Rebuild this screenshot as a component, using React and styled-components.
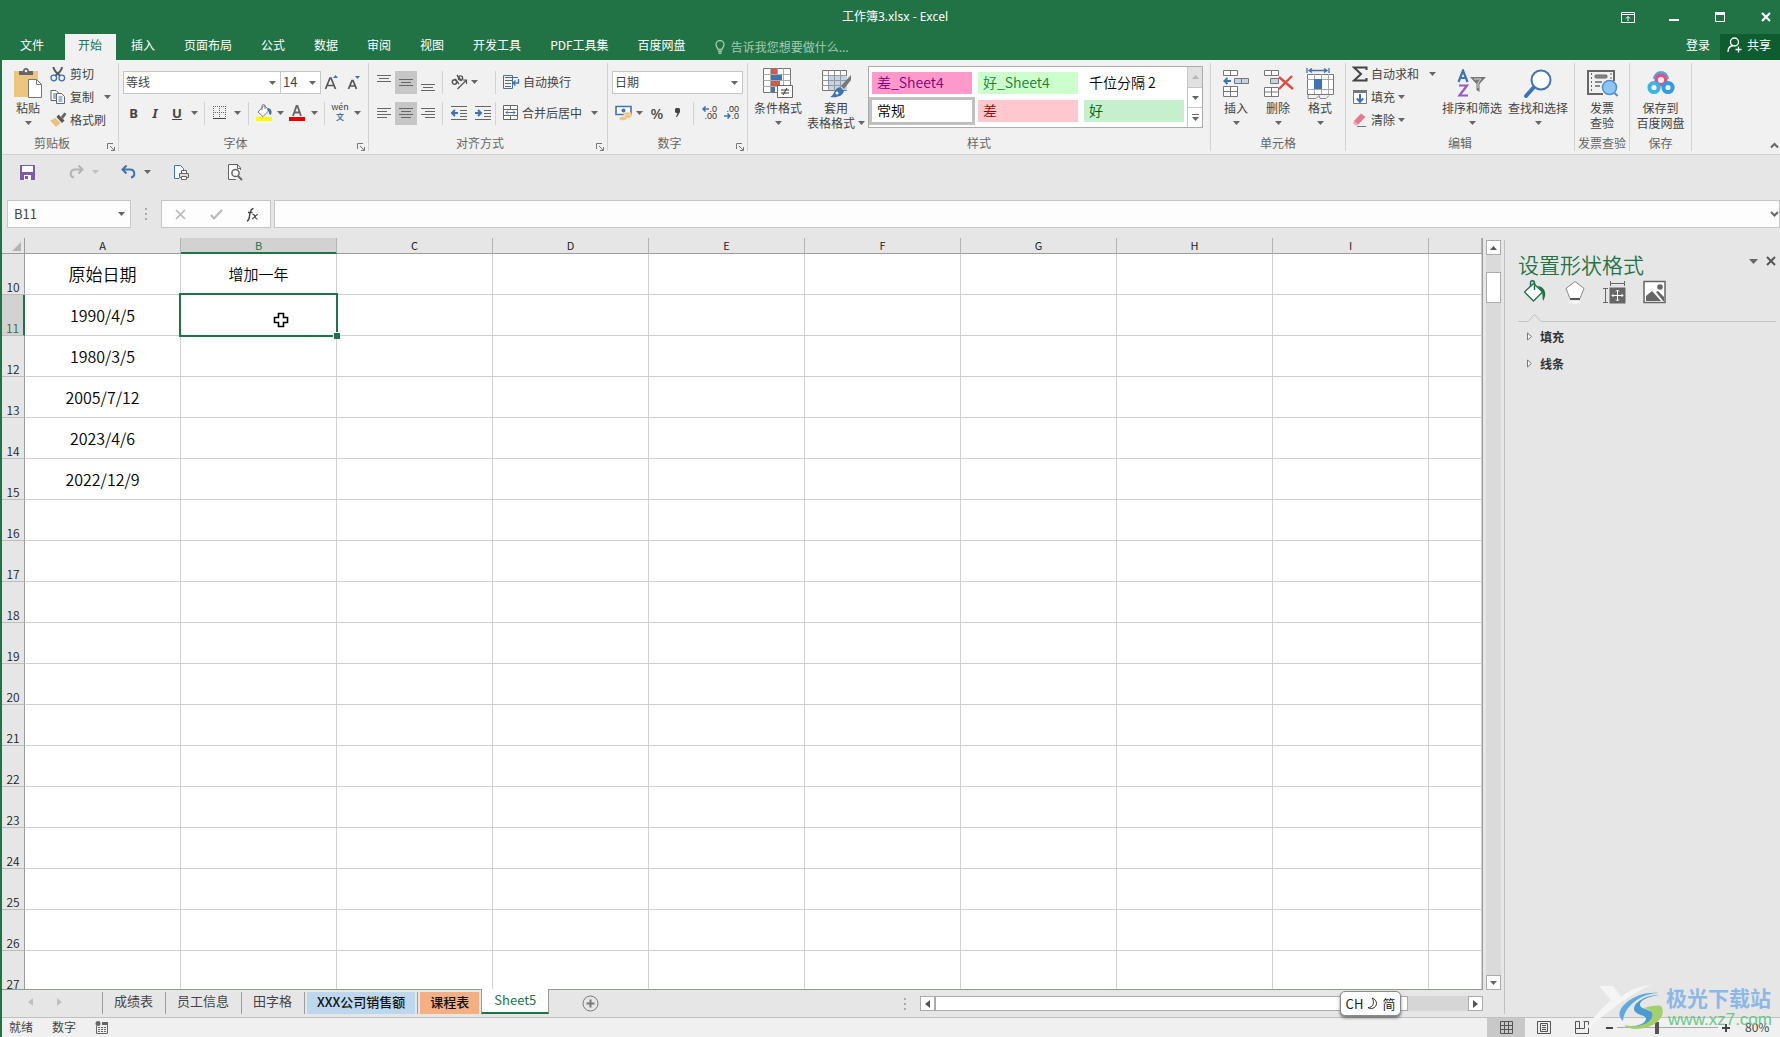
import React from "react";
import styled, { createGlobalStyle, css } from "styled-components";

const GREEN = "#217346";
const INK = "#444444";
const BLUE = "#3f74b1";

const GlobalStyle = createGlobalStyle`
  * { box-sizing: border-box; }
  html, body { margin: 0; height: 100%; overflow: hidden; }
  body, button, input, select {
    font-family: "Noto Sans CJK SC", "Noto Sans", sans-serif;
    font-size: 12px;
    line-height: 16px;
    color: ${INK};
  }
  button { border: 0; padding: 0; margin: 0; background: transparent; }
  svg { display: block; flex: none; }
`;

/* ---------- shell ---------- */
const Window = styled.div`
  position: relative;
  display: flex;
  flex-direction: column;
  height: 100vh;
  background: #e6e6e6;
  border-left: 2px solid ${GREEN};
  overflow: hidden;
`;
const TitleBar = styled.header`
  display: grid;
  grid-template-columns: 200px 1fr 200px;
  align-items: center;
  height: 34px;
  flex: none;
  background: ${GREEN};
  color: #fff;
`;
const Title = styled.h1`
  grid-column: 2;
  margin: 0;
  font-family: "Noto Sans", "Noto Sans CJK SC", sans-serif;
  font-size: 12px;
  line-height: 16px;
  font-weight: 400;
  text-align: center;
  padding-left: 8px;
`;
const WindowButtons = styled.div`
  display: flex;
  justify-content: flex-end;
`;
const WindowButton = styled.button`
  width: 46px;
  height: 32px;
  display: flex;
  align-items: center;
  justify-content: center;
  color: #fff;
  &:last-child { width: 37px; justify-content: flex-start; padding-left: 18px; }
`;

/* ---------- ribbon tabs ---------- */
const TabRow = styled.nav`
  display: flex;
  height: 26px;
  flex: none;
  background: ${GREEN};
`;
const RibbonTab = styled.button`
  height: 26px;
  margin: 0 1px;
  padding: 0 14px 4px 13px;
  white-space: nowrap;
  color: ${(p) => (p.$active ? GREEN : "#fff")};
  background: ${(p) => (p.$active ? "#f1f1f1" : "transparent")};
`;
const FileTab = styled(RibbonTab)`
  width: 60px;
  padding: 0 15px 4px 13px;
`;
const TellMe = styled.label`
  display: flex;
  align-items: center;
  gap: 6px;
  margin-left: 14px;
  color: #a3cbb2;
`;
const TellMeInput = styled.input`
  width: 140px;
  border: 0;
  padding: 0;
  background: transparent;
  &::placeholder { color: #a3cbb2; opacity: 1; }
`;
const Spacer = styled.div`
  flex: 1;
`;
const SignIn = styled.button`
  color: #fff;
  padding: 0 10px 4px;
`;
const Share = styled.button`
  display: flex;
  align-items: center;
  gap: 4px;
  width: 60px;
  padding-left: 7px;
  padding-bottom: 4px;
  color: #fff;
  background: #0e5c2f;
`;

/* ---------- ribbon ---------- */
const Ribbon = styled.section`
  display: flex;
  position: relative;
  height: 95px;
  flex: none;
  padding-top: 3px;
  background: #f1f1f1;
  border-bottom: 1px solid #d0d0d0;
`;
const GroupBox = styled.div`
  display: flex;
  flex-direction: column;
  width: ${(p) => p.$w}px;
  height: 88px;
  flex: none;
  border-right: 1px solid #d2d2d2;
`;
const GroupBody = styled.div`
  display: flex;
  height: 73px;
  padding-left: ${(p) => p.$pad || 4}px;
`;
const GroupFoot = styled.div`
  position: relative;
  height: 15px;
  line-height: 13px;
  text-align: center;
  white-space: nowrap;
  color: #666;
  padding-right: ${(p) => (p.$launch ? 16 : 0)}px;
`;
const Launcher = styled.button`
  position: absolute;
  right: 3px;
  bottom: 0;
  width: 8px;
  height: 8px;
`;
const Stack = styled.div`
  display: flex;
  flex-direction: column;
`;
const ToolRows = styled.div`
  display: flex;
  flex-direction: column;
  gap: 8px;
  padding-top: 8px;
`;
const ToolRow = styled.div`
  display: flex;
  align-items: center;
  height: 23px;
`;
const ToolButton = styled.button`
  display: flex;
  align-items: center;
  justify-content: ${(p) => (p.$start ? "flex-start" : "center")};
  gap: ${(p) => p.$gap || 4}px;
  width: ${(p) => p.$w || 22}px;
  height: 23px;
  padding-bottom: 2px;
  flex: none;
  white-space: nowrap;
  background: ${(p) => (p.$on ? "#c6c6c6" : "transparent")};
`;
const LetterButton = styled(ToolButton)`
  font-family: "Noto Sans", sans-serif;
  font-size: ${(p) => p.$size || 13}px;
  font-weight: ${(p) => p.$weight || 700};
  font-style: ${(p) => (p.$italic ? "italic" : "normal")};
  text-decoration: ${(p) => (p.$under ? "underline" : "none")};
`;
const Divider = styled.i`
  width: 1px;
  height: 23px;
  margin: 0 ${(p) => p.$r ?? 4}px 0 ${(p) => p.$l ?? 3}px;
  background: #d2d2d2;
`;
const LargeButton = styled.button`
  display: flex;
  flex-direction: column;
  align-items: center;
  width: ${(p) => p.$w}px;
  flex: none;
  height: 70px;
  padding-top: 5px;
  line-height: 15px;
  white-space: nowrap;
`;
const LargeIcon = styled.span`
  display: flex;
  align-items: center;
  justify-content: center;
  height: 30px;
  margin-bottom: 2px;
`;
const LargeLine = styled.span`
  display: flex;
  align-items: center;
  justify-content: center;
  gap: 3px;
  height: 15px;
`;
const SelectBox = styled.label`
  position: relative;
  display: flex;
  width: ${(p) => p.$w}px;
  height: 23px;
  margin-left: ${(p) => (p.$join ? -1 : 0)}px;
  background: #fff;
  border: 1px solid #c6c6c6;
  & > svg { position: absolute; right: 4px; top: 9px; pointer-events: none; }
`;
const Select = styled.select`
  appearance: none;
  width: 100%;
  border: 0;
  padding: 0 0 1px 2px;
  background: transparent;
  font-size: ${(p) => p.$size || 12}px;
`;

/* ---------- style gallery ---------- */
const Gallery = styled.div`
  display: flex;
  width: 335px;
  height: 62px;
  margin-top: 3px;
  background: #fff;
  border: 1px solid #ababab;
`;
const GalleryGrid = styled.div`
  display: grid;
  grid-template-columns: repeat(3, 100px);
  grid-auto-rows: 22px;
  gap: 6px;
  padding: 5px 3px;
  flex: 1;
`;
const StyleChip = styled.button`
  padding: 0 5px 2px;
  text-align: left;
  font-size: 14px;
  line-height: 20px;
  font-weight: 350;
  white-space: nowrap;
  color: ${(p) => p.$ink};
  background: ${(p) => p.$bg};
  outline: ${(p) => (p.$selected ? "3px solid #c0c0c0" : "none")};
`;
const GalleryScroll = styled.div`
  display: grid;
  grid-template-rows: 20px 20px 20px;
  width: 15px;
  border-left: 1px solid #c6c6c6;
`;
const GalleryStep = styled.button`
  display: flex;
  flex-direction: column;
  gap: 2px;
  align-items: center;
  justify-content: center;
  background: ${(p) => (p.$off ? "#e1e1e1" : "#fff")};
  color: ${(p) => (p.$off ? "#b5b5b5" : "#666")};
  & + & { border-top: 1px solid #c6c6c6; }
`;
const Collapse = styled.button`
  position: absolute;
  right: 0;
  bottom: 4px;
  width: 10px;
  height: 10px;
`;

/* ---------- quick access and formula bar ---------- */
const QuickBar = styled.div`
  display: flex;
  align-items: center;
  height: 45px;
  flex: none;
  padding: 0 0 11px 12px;
`;
const QuickButton = styled.button`
  display: flex;
  align-items: center;
  justify-content: center;
  gap: 8px;
  width: ${(p) => p.$w}px;
  height: 24px;
  margin-right: ${(p) => p.$after}px;
`;
const FormulaBar = styled.div`
  display: flex;
  height: 28px;
  flex: none;
  padding-left: 5px;
`;
const FieldBox = styled.div`
  display: flex;
  align-items: center;
  justify-content: space-between;
  width: ${(p) => p.$w}px;
  flex: ${(p) => (p.$grow ? 1 : "none")};
  background: #fdfdfd;
  border: 1px solid #c6c6c6;
`;
const NameInput = styled.input`
  width: 100px;
  border: 0;
  padding: 0 0 0 6px;
  font-size: 13px;
  background: transparent;
`;
const FormulaInput = styled.input`
  flex: 1;
  border: 0;
  padding: 0 6px;
  background: transparent;
`;
const BarButton = styled.button`
  display: flex;
  align-items: center;
  justify-content: center;
  width: ${(p) => p.$w}px;
  height: 26px;
`;
const Grip = styled.span`
  display: flex;
  align-items: center;
  justify-content: center;
  width: ${(p) => p.$w}px;
`;

/* ---------- work area ---------- */
const Work = styled.main`
  display: flex;
  flex: 1;
  min-height: 0;
  padding-top: 10px;
`;
const SheetSide = styled.div`
  display: flex;
  flex-direction: column;
  flex: 1;
  min-width: 0;
`;
const GridRow = styled.div`
  display: flex;
  flex: 1;
  min-height: 0;
`;
const GridView = styled.div`
  flex: 1;
  overflow: hidden;
  border-right: 1px solid #9c9c9c;
  border-bottom: 1px solid #8f9b8f;
`;
const Table = styled.table`
  width: 100%;
  table-layout: fixed;
  border-collapse: separate;
  border-spacing: 0;
`;
const Corner = styled.th`
  width: 23px;
  height: 16px;
  padding: 0 3px 2px 0;
  vertical-align: bottom;
  border-right: 1px solid #9c9c9c;
  border-bottom: 1px solid #9c9c9c;
  & > svg { margin-left: auto; }
`;
const ColHead = styled.th`
  width: ${(p) => (p.$last ? "auto" : "156px")};
  height: 16px;
  padding: 0;
  font-size: 11px;
  line-height: 13px;
  font-weight: 400;
  background: ${(p) => (p.$on ? "#d2d2d2" : "#e6e6e6")};
  color: ${(p) => (p.$on ? GREEN : "#222")};
  border-right: 1px solid #b4b4b4;
  border-bottom: ${(p) => (p.$on ? `2px solid ${GREEN}` : "1px solid #9c9c9c")};
`;
const RowHead = styled.th`
  height: 41px;
  padding: 0 0 1px;
  font-size: 12px;
  line-height: 13px;
  font-weight: 350;
  vertical-align: bottom;
  background: ${(p) => (p.$on ? "#d2d2d2" : "#e6e6e6")};
  color: ${(p) => (p.$on ? GREEN : "#222")};
  border-right: ${(p) => (p.$on ? `2px solid ${GREEN}` : "1px solid #9c9c9c")};
  border-bottom: 1px solid #bdbdbd;
`;
const Cell = styled.td`
  position: relative;
  height: 41px;
  padding: 0;
  text-align: center;
  vertical-align: middle;
  font-size: ${(p) => p.$size || 16}px;
  line-height: 22px;
  font-weight: 350;
  color: #000;
  background: #fff;
  border-right: 1px solid #d0d0d0;
  border-bottom: 1px solid #d0d0d0;
`;
const Selection = styled.span`
  position: absolute;
  z-index: 1;
  inset: -2px;
  border: 2px solid ${GREEN};
  &::after {
    content: "";
    position: absolute;
    right: -4px;
    bottom: -4px;
    width: 6px;
    height: 6px;
    background: ${GREEN};
    border: solid #fff;
    border-width: 1px 0 0 1px;
  }
`;
const Pointer = styled.span`
  position: absolute;
  z-index: 2;
  left: 92px;
  top: 17px;
`;
const VScroll = styled.div`
  display: flex;
  flex-direction: column;
  width: 15px;
  margin: 2px 3px 0 3px;
  background: #dadada;
`;
const ScrollStep = styled.button`
  display: flex;
  align-items: center;
  justify-content: center;
  width: 15px;
  height: 15px;
  flex: none;
  background: #fff;
  border: 1px solid #ababab;
  color: #555;
`;
const VThumb = styled.div`
  height: 31px;
  margin-top: 17px;
  background: #fff;
  border: 1px solid #ababab;
`;

/* ---------- sheet tabs ---------- */
const SheetBar = styled.div`
  display: flex;
  height: 27px;
  flex: none;
`;
const SheetNav = styled.div`
  display: flex;
  align-items: center;
  gap: 24px;
  width: 101px;
  padding: 0 0 2px 26px;
  color: #c0c0c0;
  border-right: 1px solid #9c9c9c;
  height: 22px;
  margin-top: 2px;
`;
const SheetTab = styled.button`
  height: 22px;
  margin-top: 2px;
  padding: 0 12px 4px 11px;
  font-size: 13px;
  white-space: nowrap;
  color: ${INK};
  border-right: 1px solid #9c9c9c;
  ${(p) => p.$active && css`
    height: 25px;
    margin-top: -1px;
    padding: 0 12px 2px 12px;
    background: #fff;
    color: ${GREEN};
    border-left: 1px solid #9c9c9c;
    border-bottom: 2px solid ${GREEN};
  `}
`;
const ColoredTab = styled(SheetTab)`
  padding: 0 2px;
  color: #111;
  font-weight: 500;
  border-right: ${(p) => (p.$last ? 0 : "1px solid #9c9c9c")};
`;
const TabColor = styled.span`
  display: block;
  height: 22px;
  padding: 1px 10px 3px;
  line-height: 18px;
  background: ${(p) => p.$bg};
`;
const AddSheet = styled.button`
  display: flex;
  margin: 5px 0 0 33px;
  width: 17px;
  height: 17px;
`;
const HScroll = styled.div`
  position: relative;
  display: flex;
  width: 563px;
  height: 15px;
  margin: 6px 21px 0 0;
  background: #d6d6d6;
`;
const HThumb = styled.div`
  width: 473px;
  background: #fff;
  border: 1px solid #ababab;
`;
const ImeBadge = styled.div`
  position: absolute;
  left: 420px;
  top: -5px;
  display: flex;
  align-items: center;
  justify-content: center;
  gap: 4px;
  width: 61px;
  height: 25px;
  font-size: 13px;
  white-space: nowrap;
  color: #222;
  background: #fff;
  border: 1px solid #8a8a8a;
  border-radius: 5px;
  box-shadow: 0 2px 3px rgba(0, 0, 0, 0.5);
`;

/* ---------- format pane ---------- */
const Pane = styled.aside`
  width: 276px;
  flex: none;
  margin: 2px 0 3px;
  padding: 12px 4px 0 13px;
  border-left: 1px solid #c0c0c0;
`;
const PaneHead = styled.div`
  display: flex;
  align-items: flex-start;
  gap: 8px;
`;
const PaneTitle = styled.h2`
  flex: 1;
  margin: 0;
  font-size: 21px;
  line-height: 24px;
  font-weight: 350;
  color: ${GREEN};
`;
const PaneTool = styled.button`
  display: flex;
  align-items: center;
  height: 12px;
  margin-top: 3px;
  color: #555;
`;
const PaneTabs = styled.div`
  display: flex;
  gap: 16px;
  padding: 4px 0 0 5px;
`;
const PaneTab = styled.button`
  width: 24px;
  height: 24px;
`;
const PaneRule = styled.svg`
  width: 100%;
  height: 10px;
  margin: 9px 0 3px;
`;
const PaneSection = styled.button`
  display: flex;
  align-items: center;
  gap: 8px;
  height: 27px;
  padding-left: 9px;
  padding-bottom: 6px;
  font-weight: 700;
  font-size: 12px;
  color: #333;
`;

/* ---------- status bar ---------- */
const StatusBar = styled.footer`
  display: flex;
  align-items: center;
  height: 20px;
  flex: none;
  padding-left: 7px;
  background: #f0f0f0;
  border-top: 1px solid #c0c0c0;
`;
const StatusText = styled.span`
  margin-right: 19px;
  padding-bottom: 2px;
`;
const ViewButton = styled.button`
  display: flex;
  align-items: center;
  justify-content: center;
  width: 38px;
  height: 19px;
  background: ${(p) => (p.$on ? "#c8c8c8" : "transparent")};
`;
const ZoomStep = styled.button`
  display: flex;
  width: 8px;
  height: 8px;
  color: #444;
`;
const ZoomRange = styled.input`
  appearance: none;
  width: 101px;
  height: 12px;
  margin: 0 4px 0 4px;
  background: linear-gradient(#a8a8a8, #a8a8a8) center / 100% 1px no-repeat;
  &::-webkit-slider-thumb {
    appearance: none;
    width: 4px;
    height: 12px;
    background: #555;
  }
`;
const ZoomValue = styled.span`
  width: 50px;
  padding: 0 0 2px 15px;
`;
const Watermark = styled.div`
  position: absolute;
  right: 8px;
  bottom: 5px;
  display: flex;
  align-items: flex-start;
  pointer-events: none;
`;
const MarkText = styled.div`
  display: flex;
  flex-direction: column;
`;
const MarkName = styled.span`
  font-size: 21px;
  line-height: 26px;
  font-weight: 700;
  color: #8db8e6;
`;
const MarkUrl = styled.span`
  padding-left: 2px;
  font-family: "Liberation Sans", sans-serif;
  font-size: 17px;
  line-height: 20px;
  color: #6cc788;
`;

/* ---------- icons ---------- */
const Down = ({ c = "#666" }) => (
  <svg width="7" height="4" viewBox="0 0 7 4"><path d="M0 0h7L3.5 4z" fill={c} /></svg>
);
const Up = ({ c = "currentColor" }) => (
  <svg width="7" height="4" viewBox="0 0 7 4"><path d="M0 4h7L3.5 0z" fill={c} /></svg>
);
const Side = ({ flip, s = 8 }) => (
  <svg width="5" height={s} viewBox="0 0 5 8"><path d={flip ? "M5 0v8L0 4z" : "M0 0v8l5-4z"} fill="currentColor" /></svg>
);
const LaunchIcon = () => (
  <svg width="8" height="8" viewBox="0 0 8 8" fill="none" stroke="#777"><path d="M.5 6V.5H6M3 3l4 4M7.500 4v3.500H4" /></svg>
);
const PasteIcon = () => (
  <svg width="30" height="30" viewBox="0 0 30 30">
    <rect x="1" y="3" width="24" height="26" fill="#ecc57f" />
    <path d="M6 3h4c0-4 6-4 6 0h4v4H6z" fill="#666" /><circle cx="13" cy="3" r="1.300" fill="#eee" />
    <path d="M15.500 11.500h8l5 5v13h-13z" fill="#fff" stroke="#777" /><path d="M23.500 11.500v5h5" fill="none" stroke="#777" />
  </svg>
);
const CutIcon = () => (
  <svg width="16" height="16" viewBox="0 0 16 16" fill="none">
    <path d="M3.500 1c0 3 3 6 7 9M12 1c0 3-3 6-7 9" stroke="#555" strokeWidth="2" />
    <circle cx="3.800" cy="12" r="2.800" stroke={BLUE} strokeWidth="1.300" /><circle cx="11.800" cy="12" r="2.800" stroke={BLUE} strokeWidth="1.300" />
  </svg>
);
const CopyIcon = () => (
  <svg width="16" height="16" viewBox="0 0 16 16" fill="#fff" stroke="#666">
    <path d="M1 1.500h5l2 2v8H1z" /><path d="M3 5h3M3 7h3M3 9h3" stroke={BLUE} />
    <path d="M6.500 4.500h5l3 3v7h-8z" /><path d="M8.500 8h4M8.500 10h4M8.500 12h4" stroke={BLUE} />
  </svg>
);
const BrushIcon = () => (
  <svg width="17" height="16" viewBox="0 0 17 16">
    <path d="M0 8.500l5.500-2.500 5 5L6 15z" fill="#ecc07c" /><path d="M6.500 5l2-2.500 6 6-2.500 2.500z" fill="#555" /><path d="M11 4.500L14.500.5l2 1.500-3.500 5z" fill="#666" />
  </svg>
);
const GrowIcon = ({ down }) => (
  <svg width="16" height="18" viewBox="0 0 16 18">
    <path d={down ? "M2.500 16L6 7.500h1L10.500 16M4 13h5" : "M1.500 16L6 5h1l4.500 11M3.500 12.500h6"} fill="none" stroke="#555" strokeWidth="1.700" />
    <path d={down ? "M9 3h5l-2.500 3z" : "M9 5h5l-2.500-3z"} fill={BLUE} />
  </svg>
);
const BorderIcon = () => (
  <svg width="14" height="14" viewBox="0 0 14 14" fill="none" stroke="#666"><path d="M.5 0v12M6.500 0v12M12.500 0v12M0 .5h13M0 6.500h13" strokeDasharray="1 1" /><path d="M0 12.500h13" stroke="#444" /></svg>
);
const FillIcon = () => (
  <svg width="17" height="17" viewBox="0 0 17 17">
    <path d="M8 1.500L2 8l5 4.500L13.500 6z" fill="#fff" stroke="#777" /><path d="M6 6V2c0-2 3-2 3 0v3" fill="none" stroke="#777" />
    <path d="M12 4c4 1 4 4 3 7l-2-1c0-2 0-3-2-4z" fill={BLUE} /><rect y="13" width="16" height="4" fill="#ffff00" />
  </svg>
);
const FontColorIcon = () => (
  <svg width="16" height="17" viewBox="0 0 16 17"><path d="M4 12L7.500 2h1L12 12M5.500 8.500h5" fill="none" stroke="#666" strokeWidth="1.800" /><rect y="13" width="16" height="4" fill="#e60000" /></svg>
);
const Phonetic = styled.span`
  display: flex;
  flex-direction: column;
  align-items: center;
  font-size: 9px;
  line-height: 9px;
`;
const PhoneticBase = styled.b`
  font-size: 8px;
  line-height: 12px;
  color: ${BLUE};
`;
const LinesIcon = ({ lines, y = 0 }) => (
  <svg width="14" height="18" viewBox="0 0 14 18" stroke="#666">
    {lines.map(([a, b], i) => <path key={i} d={`M${a} ${y + i * 3 + 0.5}H${b}`} />)}
  </svg>
);
const OrientIcon = () => (
  <svg width="17" height="16" viewBox="0 0 17 16" fill="none" stroke="#555" strokeWidth="1.400">
    <circle cx="3.500" cy="8" r="2.200" /><path d="M4 5l4 5M6 1l4.500 6" /><circle cx="9.500" cy="4" r="2.100" /><path d="M6.500 15L15 6.500M15.500 10V6h-4" strokeWidth="1.200" />
  </svg>
);
const IndentIcon = ({ right }) => (
  <svg width="17" height="14" viewBox="0 0 17 14" fill="none" stroke="#666">
    <path d="M0 .5h16M9 4.500h7M9 7.500h7M9 10.500h7M0 13.500h16" />
    <path d={right ? "M0 7h5M3 4l3 3-3 3" : "M2 7h5M4 4L1 7l3 3"} stroke={BLUE} strokeWidth="2" />
  </svg>
);
const WrapIcon = () => (
  <svg width="17" height="16" viewBox="0 0 17 16" fill="none" stroke="#666">
    <path d="M.5 1.500h9v13h-9z" stroke={BLUE} /><path d="M2 3.500h13M2 6.500h8M2 9.500h6M2 12.500h6" /><path d="M15.500 5v4h-5M12.500 6.500l-2.500 2.500 2.500 2.500" stroke={BLUE} strokeWidth="1.400" />
  </svg>
);
const MergeIcon = () => (
  <svg width="15" height="15" viewBox="0 0 15 15" fill="#fff" stroke="#666">
    <path d="M.5.5h14v14H.5zM.5 4.500h14M.5 10.500h14M7.500.5v4M7.500 10.500v4" /><path d="M3 7.500h9M5 5.500l-2 2 2 2M10 5.500l2 2-2 2" stroke={BLUE} fill="none" />
  </svg>
);
const MoneyIcon = () => (
  <svg width="17" height="16" viewBox="0 0 17 16">
    <path d="M1 1.500h15v8H1z" fill="#fff" stroke={BLUE} strokeWidth="1.600" /><circle cx="8.500" cy="5.500" r="2" fill={BLUE} />
    <g fill="#ecc07c" stroke="#f1f1f1" strokeWidth=".6"><ellipse cx="12.500" cy="9" rx="3.800" ry="1.900" /><ellipse cx="12.500" cy="11.500" rx="3.800" ry="1.900" /><ellipse cx="8" cy="13.500" rx="3.800" ry="1.900" /></g>
  </svg>
);
const Decimals = styled.span`
  display: flex;
  flex-direction: column;
  width: 16px;
  font-family: "Liberation Sans", sans-serif;
  font-size: 9px;
  line-height: 7px;
  color: #333;
`;
const DecimalLine = styled.span`
  display: flex;
  align-items: center;
  justify-content: flex-end;
`;
const TinyArrow = ({ right }) => (
  <svg width="7" height="6" viewBox="0 0 7 6" fill="none" stroke={BLUE} strokeWidth="1.500"><path d={right ? "M0 3h6M3.500.5L6 3 3.500 5.500" : "M7 3H1M3.500.5L1 3l2.500 2.500"} /></svg>
);
const CondIcon = () => (
  <svg width="30" height="30" viewBox="0 0 30 30">
    <path d="M.5.5h27v24H.5z" fill="#fff" stroke="#777" /><path d="M7.500.5v24M14.500.5v24M20.500.5v24M.5 6.500h27M.5 12.500h27M.5 18.500h27" stroke="#aaa" />
    <path d="M8 1h6v5H8zM8 13h9v5H8z" fill="#d35b45" /><path d="M8 7h11v5H8zM8 19h4v5H8z" fill={BLUE} />
    <path d="M14.500 17.500h15v12h-15z" fill="#fff" stroke="#666" /><path d="M18 22h8M18 25h8M24 20l-4 7" stroke="#333" />
  </svg>
);
const TableFmtIcon = () => (
  <svg width="32" height="30" viewBox="-2 0 32 30">
    <path d="M.5 2.500h24v20H.5z" fill="#fff" stroke="#777" /><path d="M7 8h18v14H7z" fill="#c3d5e8" />
    <path d="M6.500 2.500v20M12.500 2.500v20M18.500 2.500v20M.5 7.500h24M.5 12.500h24M.5 17.500h24" stroke="#999" />
    <path d="M29 7v5l-7 9-3-3z" fill="#777" /><path d="M18 19l4 4c-1 5-7 7-14 6 4-1 4-9 10-10z" fill={BLUE} /><circle cx="15" cy="25" r="1.500" fill="#fff" />
  </svg>
);
const InsertIcon = () => (
  <svg width="28" height="28" viewBox="0 0 28 28" fill="#fff" stroke="#777">
    <path d="M1.500 1.500h14v5h-14zM8.500 1.500v5M1.500 17.500h14v10h-14zM1.500 22.500h14M8.500 17.500v10" /><path d="M12.500 9.500h14v5h-14zM19.500 9.500v5" fill="#c3d5e0" />
    <path d="M9 12H3M5.500 9L2.500 12l3 3" stroke={BLUE} strokeWidth="2" fill="none" />
  </svg>
);
const DeleteIcon = () => (
  <svg width="31" height="28" viewBox="0 0 31 28" fill="#fff" stroke="#777">
    <path d="M1.500 1.500h14v5h-14zM8.500 1.500v5M1.500 18.500h14v9h-14zM1.500 23h14M8.500 18.500v9" /><path d="M7.500 9.500h8v5h-8z" fill="#c3d5e0" />
    <path d="M16 8l14 12M29 7L16 20" stroke="#de4b41" strokeWidth="2.400" />
  </svg>
);
const FormatIcon = () => (
  <svg width="29" height="31" viewBox="0 0 29 31" fill="none">
    <path d="M1 0v5M23 0v5M3 2.500h18M6 .5l-3 2 3 2M18 .5l3 2-3 2" stroke={BLUE} strokeWidth="1.300" />
    <path d="M1.500 6.500h26v20h-26z" fill="#fff" stroke="#777" /><path d="M8.500 6v20M15.500 6v20M22.500 6v20M1 11.500h26M1 21.500h26" stroke="#aaa" />
    <path d="M8 11h8v10H8z" fill={BLUE} /><path d="M2 27v3.500h8l3-3 1 3h6l3-3" stroke="#888" />
  </svg>
);
const SumIcon = () => (
  <svg width="16" height="16" viewBox="0 0 16 16"><path d="M14.500 4V1.500H2L9 8l-7 6.500h12.500V12" fill="none" stroke="#444" strokeWidth="2" /></svg>
);
const FillDownIcon = () => (
  <svg width="16" height="16" viewBox="0 0 16 16"><path d="M1.500 1.500h13v13h-13z" fill="#fff" stroke="#777" /><path d="M1 1h14v3H1z" fill="#777" /><path d="M8 5v8M5 9.500L8 13l3-3.500" fill="none" stroke={BLUE} strokeWidth="2" /></svg>
);
const EraserIcon = () => (
  <svg width="16" height="16" viewBox="0 0 16 16"><path d="M9 1.500L13.500 5 6 12.500 2 9z" fill="#e4798f" /><path d="M2 9l4 3.500L4 14 1 11z" fill="#f1a7b5" /><path d="M5 14.500h9" stroke="#777" /></svg>
);
const SortIcon = () => (
  <svg width="30" height="28" viewBox="0 0 30 28" fill="none">
    <path d="M1.500 13L6 1.500 10.500 13M3 9h6" stroke={BLUE} strokeWidth="2.200" /><path d="M2 16.500h8L2.500 26.500H11" stroke="#9a5bbd" strokeWidth="2.200" />
    <path d="M13 8h16l-6.500 7v8l-3-2v-6z" fill="#777" /><path d="M17 10h7l-3 4v5" stroke="#ddd" />
  </svg>
);
const FindIcon = () => (
  <svg width="28" height="29" viewBox="0 0 28 29"><path d="M10 18l-8 9" stroke={BLUE} strokeWidth="4" strokeLinecap="round" /><circle cx="17" cy="11" r="9.500" fill="#fff" stroke={BLUE} strokeWidth="2" /></svg>
);
const InvoiceIcon = () => (
  <svg width="31" height="28" viewBox="0 0 31 28" fill="none" stroke="#666">
    <path d="M16 25H1V2h26v10" strokeWidth="2" /><path d="M4.500 4v19M24 4v6" strokeDasharray="2 2" /><rect x="8" y="6" width="12" height="3" rx="1" fill="#888" /><path d="M8 13h7M8 17h5" strokeWidth="1.500" />
    <circle cx="22.500" cy="18.500" r="7" fill="#8ec5f5" stroke="#4f8fcb" strokeWidth="1.500" /><path d="M27.500 24l3 3" stroke="#4f8fcb" strokeWidth="2" />
  </svg>
);
const CloudIcon = () => (
  <svg width="28" height="24" viewBox="0 0 28 24" fill="none" strokeWidth="4">
    <path d="M8 8c1-8 11-8 12 0" stroke="#4aa8e0" /><circle cx="14" cy="9" r="4.800" stroke="#e85083" strokeWidth="3.500" />
    <circle cx="7" cy="16.500" r="4.600" stroke="#3db4e0" /><circle cx="21" cy="16.500" r="4.600" stroke="#2f9be0" />
  </svg>
);
const SaveIcon = () => (
  <svg width="15" height="15" viewBox="0 0 15 15"><path d="M0 0h15v15H0z" fill="#7d5ba6" /><path d="M2 1h11v6H2zM4 10h7v5H4z" fill="#fff" /><path d="M5 11h3v3H5z" fill="#7d5ba6" /></svg>
);
const UndoIcon = ({ flip, c }) => (
  <svg width="15" height="14" viewBox="0 0 15 14" fill="none" stroke={c} strokeWidth="2">
    <path d={flip ? "M14 4.500H6c-5 0-6 7-1 8M9.500.5l4 4-4 4" : "M1 4.500h8c5 0 6 7 1 8M5.500.5l-4 4 4 4"} />
  </svg>
);
const PrintIcon = () => (
  <svg width="17" height="17" viewBox="0 0 17 17" fill="none" stroke="#666"><path d="M6 14.500H1.500v-13h6l3 3V7" fill="#fff" stroke={BLUE} /><path d="M8.500 9V6.500h5V9" fill="#fff" /><path d="M6.500 9.500h9v4h-9z" fill="#ddd" /><path d="M8.500 12.500h5v3h-5z" fill="#fff" /></svg>
);
const PreviewIcon = () => (
  <svg width="15" height="17" viewBox="0 0 15 17" fill="none" stroke="#666"><path d="M12.500 6V4L9.500.5h-9v15H8" fill="#fff" /><path d="M9.500.5v4h3" /><circle cx="7.500" cy="9" r="3.600" strokeWidth="1.500" /><path d="M10 12l4 4" strokeWidth="2" /></svg>
);
const Dots = () => (
  <svg width="3" height="12" viewBox="0 0 3 12" fill="#aaa"><path d="M0 0h2v2H0zM0 5h2v2H0zM0 10h2v2H0z" /></svg>
);

/* ---------- data ---------- */
const TABS = ["开始", "插入", "页面布局", "公式", "数据", "审阅", "视图", "开发工具", "PDF工具集", "百度网盘"];
const COLS = ["A", "B", "C", "D", "E", "F", "G", "H", "I", ""];
const ROWS = Array.from({ length: 18 }, (_, i) => 10 + i);
const COLUMN_A = { 10: "原始日期", 11: "1990/4/5", 12: "1980/3/5", 13: "2005/7/12", 14: "2023/4/6", 15: "2022/12/9" };
const CHIPS = [
  { name: "差_Sheet4", bg: "#ff99cc", ink: "#800080" },
  { name: "好_Sheet4", bg: "#ccffcc", ink: "#17813a" },
  { name: "千位分隔 2", bg: "#fff", ink: "#000" },
  { name: "常规", bg: "#fff", ink: "#000", selected: true },
  { name: "差", bg: "#ffc7ce", ink: "#9c0006" },
  { name: "好", bg: "#c6efce", ink: "#006100" },
];
const FULL = [0, 14];

function Group({ label, w, pad, launch, children }) {
  return (
    <GroupBox $w={w}>
      <GroupBody $pad={pad}>{children}</GroupBody>
      <GroupFoot $launch={launch}>
        {label}
        {launch && <Launcher aria-label={`${label}设置`}><LaunchIcon /></Launcher>}
      </GroupFoot>
    </GroupBox>
  );
}

function Large({ icon, lines, w, arrow, inline }) {
  return (
    <LargeButton $w={w}>
      <LargeIcon>{icon}</LargeIcon>
      {lines.map((t, i) => (
        <LargeLine key={t}>{t}{inline && i === lines.length - 1 && <Down />}</LargeLine>
      ))}
      {arrow && <LargeLine><Down /></LargeLine>}
    </LargeButton>
  );
}

function RibbonPanel() {
  return (
    <Ribbon>
      <Group label="剪贴板" w={117} pad={4} launch>
        <Large icon={<PasteIcon />} lines={["粘贴"]} w={44} arrow />
        <Stack>
          <ToolButton $w={61} $start><CutIcon />剪切</ToolButton>
          <ToolButton $w={61} $start><CopyIcon />复制<Spacer /><Down /></ToolButton>
          <ToolButton $w={61} $start $gap={3}><BrushIcon />格式刷</ToolButton>
        </Stack>
      </Group>
      <Group label="字体" w={250} launch>
        <ToolRows>
          <ToolRow>
            <SelectBox $w={158}><Select aria-label="字体"><option>等线</option></Select><Down /></SelectBox>
            <SelectBox $w={41} $join><Select aria-label="字号" $size={13}><option>14</option></Select><Down /></SelectBox>
            <ToolButton aria-label="增大字号"><GrowIcon /></ToolButton>
            <ToolButton aria-label="减小字号"><GrowIcon down /></ToolButton>
          </ToolRow>
          <ToolRow>
            <LetterButton $w={21}>B</LetterButton>
            <LetterButton $italic>I</LetterButton>
            <LetterButton $under>U</LetterButton>
            <ToolButton $w={12} aria-label="下划线选项"><Down /></ToolButton>
            <Divider $l={4} />
            <ToolButton aria-label="边框"><BorderIcon /></ToolButton>
            <ToolButton $w={12} aria-label="边框选项"><Down /></ToolButton>
            <Divider $l={5} $r={4} />
            <ToolButton aria-label="填充颜色"><FillIcon /></ToolButton>
            <ToolButton $w={10} aria-label="填充颜色选项"><Down /></ToolButton>
            <ToolButton $w={24} aria-label="字体颜色"><FontColorIcon /></ToolButton>
            <ToolButton $w={10} aria-label="字体颜色选项"><Down /></ToolButton>
            <Divider $l={5} $r={3} />
            <ToolButton $w={24} aria-label="拼音"><Phonetic>wén<PhoneticBase>文</PhoneticBase></Phonetic></ToolButton>
            <ToolButton $w={10} aria-label="拼音选项"><Down /></ToolButton>
          </ToolRow>
        </ToolRows>
      </Group>
      <Group label="对齐方式" w={239} launch>
        <ToolRows>
          <ToolRow>
            <ToolButton aria-label="顶端对齐"><LinesIcon lines={[FULL, [2, 12], FULL]} y={2} /></ToolButton>
            <ToolButton $on aria-label="垂直居中"><LinesIcon lines={[FULL, [2, 12], FULL]} y={6} /></ToolButton>
            <ToolButton aria-label="底端对齐"><LinesIcon lines={[FULL, [2, 12], FULL]} y={11} /></ToolButton>
            <Divider />
            <ToolButton $w={48} $gap={3} $start aria-label="方向"><Grip $w={1} /><OrientIcon /><Down /></ToolButton>
            <Divider $l={0} $r={7} />
            <ToolButton $w={68} $gap={3} $start><WrapIcon />自动换行</ToolButton>
          </ToolRow>
          <ToolRow>
            <ToolButton aria-label="左对齐"><LinesIcon lines={[FULL, [0, 10], FULL, [0, 10]]} y={4} /></ToolButton>
            <ToolButton $on aria-label="居中"><LinesIcon lines={[FULL, [2, 12], FULL, [2, 12]]} y={4} /></ToolButton>
            <ToolButton aria-label="右对齐"><LinesIcon lines={[FULL, [4, 14], FULL, [4, 14]]} y={4} /></ToolButton>
            <Divider />
            <ToolButton $w={24} aria-label="减少缩进"><IndentIcon /></ToolButton>
            <ToolButton $w={24} aria-label="增加缩进"><IndentIcon right /></ToolButton>
            <Divider $l={0} $r={7} />
            <ToolButton $w={95} $start><MergeIcon />合并后居中<Spacer /><Down /></ToolButton>
          </ToolRow>
        </ToolRows>
      </Group>
      <Group label="数字" w={140} launch>
        <ToolRows>
          <ToolRow>
            <SelectBox $w={131}><Select aria-label="数字格式"><option>日期</option></Select><Down /></SelectBox>
          </ToolRow>
          <ToolRow>
            <ToolButton aria-label="货币"><MoneyIcon /></ToolButton>
            <ToolButton $w={11} aria-label="货币选项"><Down /></ToolButton>
            <LetterButton $w={24} $size={15} $weight={500}>%</LetterButton>
            <LetterButton $w={18} aria-label="千位分隔">
              <svg width="6" height="9" viewBox="0 0 6 9"><path d="M1 0h3l1 1v3L2 9H1l1.500-4H1L0 4V1z" fill="#444" /></svg>
            </LetterButton>
            <Divider $l={6} />
            <ToolButton aria-label="增加小数位数"><Decimals><DecimalLine><TinyArrow />.0</DecimalLine><DecimalLine>.00</DecimalLine></Decimals></ToolButton>
            <ToolButton aria-label="减少小数位数"><Decimals><DecimalLine>.00</DecimalLine><DecimalLine><TinyArrow right />.0</DecimalLine></Decimals></ToolButton>
          </ToolRow>
        </ToolRows>
      </Group>
      <Group label="样式" w={463} pad={4}>
        <Large icon={<CondIcon />} lines={["条件格式"]} w={52} arrow />
        <Large icon={<TableFmtIcon />} lines={["套用", "表格格式"]} w={64} inline />
        <Gallery>
          <GalleryGrid>
            {CHIPS.map((c) => (
              <StyleChip key={c.name} $bg={c.bg} $ink={c.ink} $selected={c.selected}>{c.name}</StyleChip>
            ))}
          </GalleryGrid>
          <GalleryScroll>
            <GalleryStep $off aria-label="上一行"><Up /></GalleryStep>
            <GalleryStep aria-label="下一行"><Down /></GalleryStep>
            <GalleryStep aria-label="更多样式"><svg width="7" height="1"><path d="M0 .5h7" stroke="#666" /></svg><Down /></GalleryStep>
          </GalleryScroll>
        </Gallery>
      </Group>
      <Group label="单元格" w={135}>
        <Large icon={<InsertIcon />} lines={["插入"]} w={42} arrow />
        <Large icon={<DeleteIcon />} lines={["删除"]} w={42} arrow />
        <Large icon={<FormatIcon />} lines={["格式"]} w={42} arrow />
      </Group>
      <Group label="编辑" w={229} pad={6}>
        <Stack>
          <ToolButton $w={84} $start $gap={3}><SumIcon />自动求和<Spacer /><Down /></ToolButton>
          <ToolButton $w={84} $start $gap={3}><FillDownIcon />填充<Down /></ToolButton>
          <ToolButton $w={84} $start $gap={3}><EraserIcon />清除<Down /></ToolButton>
        </Stack>
        <Large icon={<SortIcon />} lines={["排序和筛选"]} w={72} arrow />
        <Large icon={<FindIcon />} lines={["查找和选择"]} w={60} arrow />
      </Group>
      <Group label="发票查验" w={55} pad={2}>
        <Large icon={<InvoiceIcon />} lines={["发票", "查验"]} w={50} />
      </Group>
      <Group label="保存" w={62} pad={3}>
        <Large icon={<CloudIcon />} lines={["保存到", "百度网盘"]} w={55} />
      </Group>
      <Collapse aria-label="折叠功能区">
        <svg width="9" height="7" viewBox="0 0 9 7"><path d="M1 5.500L4.500 2 8 5.500" fill="none" stroke="#666" strokeWidth="2" /></svg>
      </Collapse>
    </Ribbon>
  );
}

function Grid() {
  return (
    <GridView>
      <Table>
        <thead>
          <tr>
            <Corner><svg width="9" height="9" viewBox="0 0 9 9"><path d="M9 0v9H0z" fill="#b4b4b4" /></svg></Corner>
            {COLS.map((c, i) => <ColHead key={i} $on={c === "B"} $last={c === ""}>{c}</ColHead>)}
          </tr>
        </thead>
        <tbody>
          {ROWS.map((r) => (
            <tr key={r}>
              <RowHead $on={r === 11}>{r}</RowHead>
              <Cell $size={r === 10 ? 17 : 16}>{COLUMN_A[r]}</Cell>
              <Cell $size={15}>
                {r === 10 && "增加一年"}
                {r === 11 && (
                  <>
                    <Selection />
                    <Pointer>
                      <svg width="16" height="16" viewBox="0 0 16 16"><path d="M5.500 1.500h5v4h4v5h-4v4h-5v-4h-4v-5h4z" fill="#fff" stroke="#000" strokeWidth="1.600" /></svg>
                    </Pointer>
                  </>
                )}
              </Cell>
              {COLS.slice(2).map((c, i) => <Cell key={i} />)}
            </tr>
          ))}
        </tbody>
      </Table>
    </GridView>
  );
}

function FormatPane() {
  return (
    <Pane>
      <PaneHead>
        <PaneTitle>设置形状格式</PaneTitle>
        <PaneTool aria-label="窗格选项"><svg width="9" height="5" viewBox="0 0 9 5"><path d="M0 0h9L4.500 5z" fill="#666" /></svg></PaneTool>
        <PaneTool aria-label="关闭窗格"><svg width="10" height="10" viewBox="0 0 10 10"><path d="M1 1l8 8M9 1L1 9" stroke="#555" strokeWidth="2" /></svg></PaneTool>
      </PaneHead>
      <PaneTabs>
        <PaneTab aria-label="填充与线条">
          <svg width="24" height="24" viewBox="0 0 24 24"><path d="M10.500 3.500L1.500 12l9 9L19.500 12z" fill="#fff" stroke={GREEN} strokeWidth="1.300" /><path d="M7.500 7V3c0-3 4-3 4 0v7" fill="none" stroke={GREEN} strokeWidth="1.500" /><path d="M14 6c7 0 11 7 6 15-1-5 1-10-6-15z" fill={GREEN} /></svg>
        </PaneTab>
        <PaneTab aria-label="效果">
          <svg width="24" height="24" viewBox="0 0 24 24"><path d="M12 1.500l9 7-4 10H7L3 8.500z" fill="#fff" stroke="#888" /><path d="M7 19h10" stroke="#555" strokeWidth="2" /><path d="M7 21l-2 2.500h14L17 21z" fill="#f6f6f6" /></svg>
        </PaneTab>
        <PaneTab aria-label="大小与属性">
          <svg width="24" height="24" viewBox="0 0 24 24" fill="none" stroke="#666"><path d="M7.500 1v5M21.500 1v5M8 3.500h13M0 8.500h5M0 22.500h5M2.500 9v13" /><rect x="7" y="8" width="15" height="15" fill="#666" /><path d="M14.500 10v11M9 15.500h11M13 11.500l1.500-1.500 1.500 1.500M13 19.500l1.500 1.500 1.500-1.500M10.500 14L9 15.500l1.500 1.500M18.500 14l1.500 1.500-1.500 1.500" stroke="#fff" /></svg>
        </PaneTab>
        <PaneTab aria-label="图片">
          <svg width="24" height="24" viewBox="0 0 24 24"><rect x="1" y="1.500" width="21" height="21" fill="#fff" stroke="#666" strokeWidth="1.500" /><circle cx="17" cy="7" r="2.800" fill="#666" /><path d="M3 21v-5l6-5 9 10z" fill="#666" /><path d="M13 12l2-1 6 6v4h-1z" fill="#666" /></svg>
        </PaneTab>
      </PaneTabs>
      <PaneRule aria-hidden="true">
        <path d="M0 8.500H10L16.500 1.500L23 8.500H600" fill="none" stroke="#c0c0c0" />
      </PaneRule>
      {["填充", "线条"].map((name) => (
        <PaneSection key={name}>
          <svg width="5" height="9" viewBox="0 0 5 9"><path d="M.5 1v7L4.500 4.500z" fill="#fff" stroke="#777" /></svg>
          {name}
        </PaneSection>
      ))}
    </Pane>
  );
}

export default function App() {
  return (
    <>
      <GlobalStyle />
      <Window>
        <TitleBar>
          <Title>工作簿3.xlsx - Excel</Title>
          <WindowButtons>
            <WindowButton aria-label="功能区显示选项"><svg width="14" height="11" viewBox="0 0 14 11" fill="none" stroke="#fff"><path d="M.5.5h13v10H.5zM.5 2.500h13M7 9V4.500M5 6.500l2-2 2 2" /></svg></WindowButton>
            <WindowButton aria-label="最小化"><svg width="10" height="10"><path d="M0 8h10" stroke="#fff" strokeWidth="2" /></svg></WindowButton>
            <WindowButton aria-label="最大化"><svg width="10" height="10"><path d="M.5.5h9v9h-9z" fill="none" stroke="#fff" /><path d="M0 1.500h10" stroke="#fff" strokeWidth="3" /></svg></WindowButton>
            <WindowButton aria-label="关闭"><svg width="10" height="10"><path d="M1 1l8 8M9 1L1 9" stroke="#fff" strokeWidth="2.200" /></svg></WindowButton>
          </WindowButtons>
        </TitleBar>
        <TabRow>
          <FileTab>文件</FileTab>
          {TABS.map((t, i) => <RibbonTab key={t} $active={i === 0}>{t}</RibbonTab>)}
          <TellMe>
            <svg width="10" height="14" viewBox="0 0 10 14" fill="none" stroke="#a3cbb2" strokeWidth="1.300"><path d="M3 9.500C3 8 1 7 1 4.500a4 4 0 018 0C9 7 7 8 7 9.500zM3 11.500h4M3.500 13.300h3" /></svg>
            <TellMeInput aria-label="告诉我您想要做什么" placeholder="告诉我您想要做什么..." />
          </TellMe>
          <Spacer />
          <SignIn>登录</SignIn>
          <Share>
            <svg width="16" height="16" viewBox="0 0 16 16" fill="none" stroke="#fff" strokeWidth="1.400"><circle cx="7.500" cy="5" r="4" /><path d="M1 15c0-3.500 2-6 5-6.500M8.500 12.500h6M11.500 9.500v6" /></svg>
            共享
          </Share>
        </TabRow>
        <RibbonPanel />
        <QuickBar>
          <QuickButton $w={26} $after={26} aria-label="保存"><SaveIcon /></QuickButton>
          <QuickButton $w={36} $after={18} aria-label="恢复"><UndoIcon flip c="#b4b4b4" /><Down c="#c0c0c0" /></QuickButton>
          <QuickButton $w={32} $after={15} aria-label="撤消"><UndoIcon c={BLUE} /><Down /></QuickButton>
          <QuickButton $w={28} $after={27} aria-label="打印"><PrintIcon /></QuickButton>
          <QuickButton $w={26} $after={0} aria-label="打印预览"><PreviewIcon /></QuickButton>
        </QuickBar>
        <FormulaBar>
          <FieldBox $w={124}>
            <NameInput aria-label="名称框" defaultValue="B11" />
            <BarButton $w={18} aria-label="名称列表"><Down /></BarButton>
          </FieldBox>
          <Grip $w={30}><Dots /></Grip>
          <FieldBox $w={110}>
            <BarButton $w={36} aria-label="取消"><svg width="11" height="11"><path d="M1 1l9 9M10 1l-9 9" stroke="#b8b8b8" strokeWidth="1.600" /></svg></BarButton>
            <BarButton $w={36} aria-label="输入"><svg width="13" height="11"><path d="M1 6l3 3.500L12 1" fill="none" stroke="#b8b8b8" strokeWidth="2" /></svg></BarButton>
            <BarButton $w={36} aria-label="插入函数">
              <svg width="13" height="15" viewBox="0 0 13 15" fill="none" stroke="#444"><path d="M1 14c2 0 2-2 2.500-5S4.500 1.500 7.500 1.500M2 5.500h4.500" strokeWidth="1.400" /><path d="M6.500 7.500c3-1 2 5 5 4.500M12 7.500c-2-.5-4 4.500-6 4.500" strokeWidth="1.200" /></svg>
            </BarButton>
          </FieldBox>
          <Grip $w={3} />
          <FieldBox $grow>
            <FormulaInput aria-label="编辑栏" />
            <BarButton $w={10} aria-label="展开编辑栏"><svg width="9" height="6"><path d="M1 1l3.500 3.500L8 1" fill="none" stroke="#666" strokeWidth="2" /></svg></BarButton>
          </FieldBox>
        </FormulaBar>
        <Work>
          <SheetSide>
            <GridRow>
              <Grid />
              <VScroll>
                <ScrollStep aria-label="向上滚动"><Up /></ScrollStep>
                <VThumb />
                <Spacer />
                <ScrollStep aria-label="向下滚动"><Down /></ScrollStep>
              </VScroll>
            </GridRow>
            <SheetBar>
              <SheetNav><Side flip /><Side /></SheetNav>
              <SheetTab>成绩表</SheetTab>
              <SheetTab>员工信息</SheetTab>
              <SheetTab>田字格</SheetTab>
              <ColoredTab><TabColor $bg="#bdd7ee">XXX公司销售额</TabColor></ColoredTab>
              <ColoredTab $last><TabColor $bg="#f4b084">课程表</TabColor></ColoredTab>
              <SheetTab $active>Sheet5</SheetTab>
              <AddSheet aria-label="新建工作表">
                <svg width="17" height="17" viewBox="0 0 17 17" fill="none" stroke="#777"><circle cx="8.500" cy="8.500" r="7.500" /><path d="M4.500 8.500h8M8.500 4.500v8" strokeWidth="2" /></svg>
              </AddSheet>
              <Spacer />
              <Grip $w={30}><Dots /></Grip>
              <HScroll>
                <ScrollStep aria-label="向左滚动"><Side flip /></ScrollStep>
                <HThumb />
                <Spacer />
                <ScrollStep aria-label="向右滚动"><Side /></ScrollStep>
                <ImeBadge>
                  CH
                  <svg width="11" height="13" viewBox="0 0 11 13"><path d="M5 1c6 2 6 9 0 10.500C3 12 2 11.500 1 10.500 6 11 8 5 5 1z" fill="#fff" stroke="#333" /></svg>
                  简
                </ImeBadge>
              </HScroll>
            </SheetBar>
          </SheetSide>
          <FormatPane />
        </Work>
        <StatusBar>
          <StatusText>就绪</StatusText>
          <StatusText>数字</StatusText>
          <svg width="13" height="13" viewBox="0 0 13 13" fill="none" stroke="#666"><path d="M1.500 5v7.500h11v-9" /><path d="M7 1h6v3H7z" fill="#666" stroke="none" /><circle cx="3" cy="2.500" r="2.500" fill="#666" stroke="none" /><path d="M3 6.500h8M3 8.500h8M3 10.500h8" strokeDasharray="2 1" /></svg>
          <Spacer />
          <ViewButton $on aria-label="普通"><svg width="13" height="13" viewBox="0 0 13 13" fill="none" stroke="#555"><path d="M.5.5h12v12H.5zM4.500.5v12M8.500.5v12M.5 4.500h12M.5 8.500h12" /></svg></ViewButton>
          <ViewButton aria-label="页面布局"><svg width="14" height="13" viewBox="0 0 14 13" fill="none" stroke="#555"><path d="M.5.5h13v12H.5zM3.500 2.500h7v8h-7zM5 4.500h4M5 6.500h4M5 8.500h4" /></svg></ViewButton>
          <ViewButton aria-label="分页预览"><svg width="14" height="13" viewBox="0 0 14 13" fill="none" stroke="#555"><path d="M4.500.5h-4v12h13V.5h-4v7h-9M4.500.5v7M9.500.5h-1" /></svg></ViewButton>
          <Grip $w={4} />
          <ZoomStep aria-label="缩小"><svg width="8" height="8"><path d="M1 4h7" stroke="#444" strokeWidth="2" /></svg></ZoomStep>
          <ZoomRange type="range" min="0" max="100" defaultValue="39" aria-label="缩放" />
          <ZoomStep aria-label="放大"><svg width="8" height="8"><path d="M0 4h8M4 0v8" stroke="#444" strokeWidth="2" /></svg></ZoomStep>
          <ZoomValue>80%</ZoomValue>
        </StatusBar>
        <Watermark>
          <svg width="82" height="48" viewBox="0 0 82 48" fill="none">
            <path d="M15 2h14l8 11C48 4 58 2 68 1 50 7 20 30 0 48 8 34 18 24 27 16z" fill="#f5f5f5" />
            <path d="M75 9C58 9 40 22 39 37c-6-5-4-12 3-18 9-8 21-11 33-10z" fill="#5fa9df" />
            <path d="M75 11c-15 2-22 8-18 12 4 3 16 4 12 11-4 8-18 12-28 8 12 1 20-2 21-7 1-4-12-4-12-10 0-7 12-14 25-14z" fill="#4b9bd3" />
            <path d="M77 22c6 8-3 22-24 23-7 0-11-2-13-4 12 3 25 0 28-8 2-6-3-7-8-9 6-2 13-3 17-2z" fill="#a5cf6f" />
          </svg>
          <MarkText>
            <MarkName>极光下载站</MarkName>
            <MarkUrl>www.xz7.com</MarkUrl>
          </MarkText>
        </Watermark>
      </Window>
    </>
  );
}
